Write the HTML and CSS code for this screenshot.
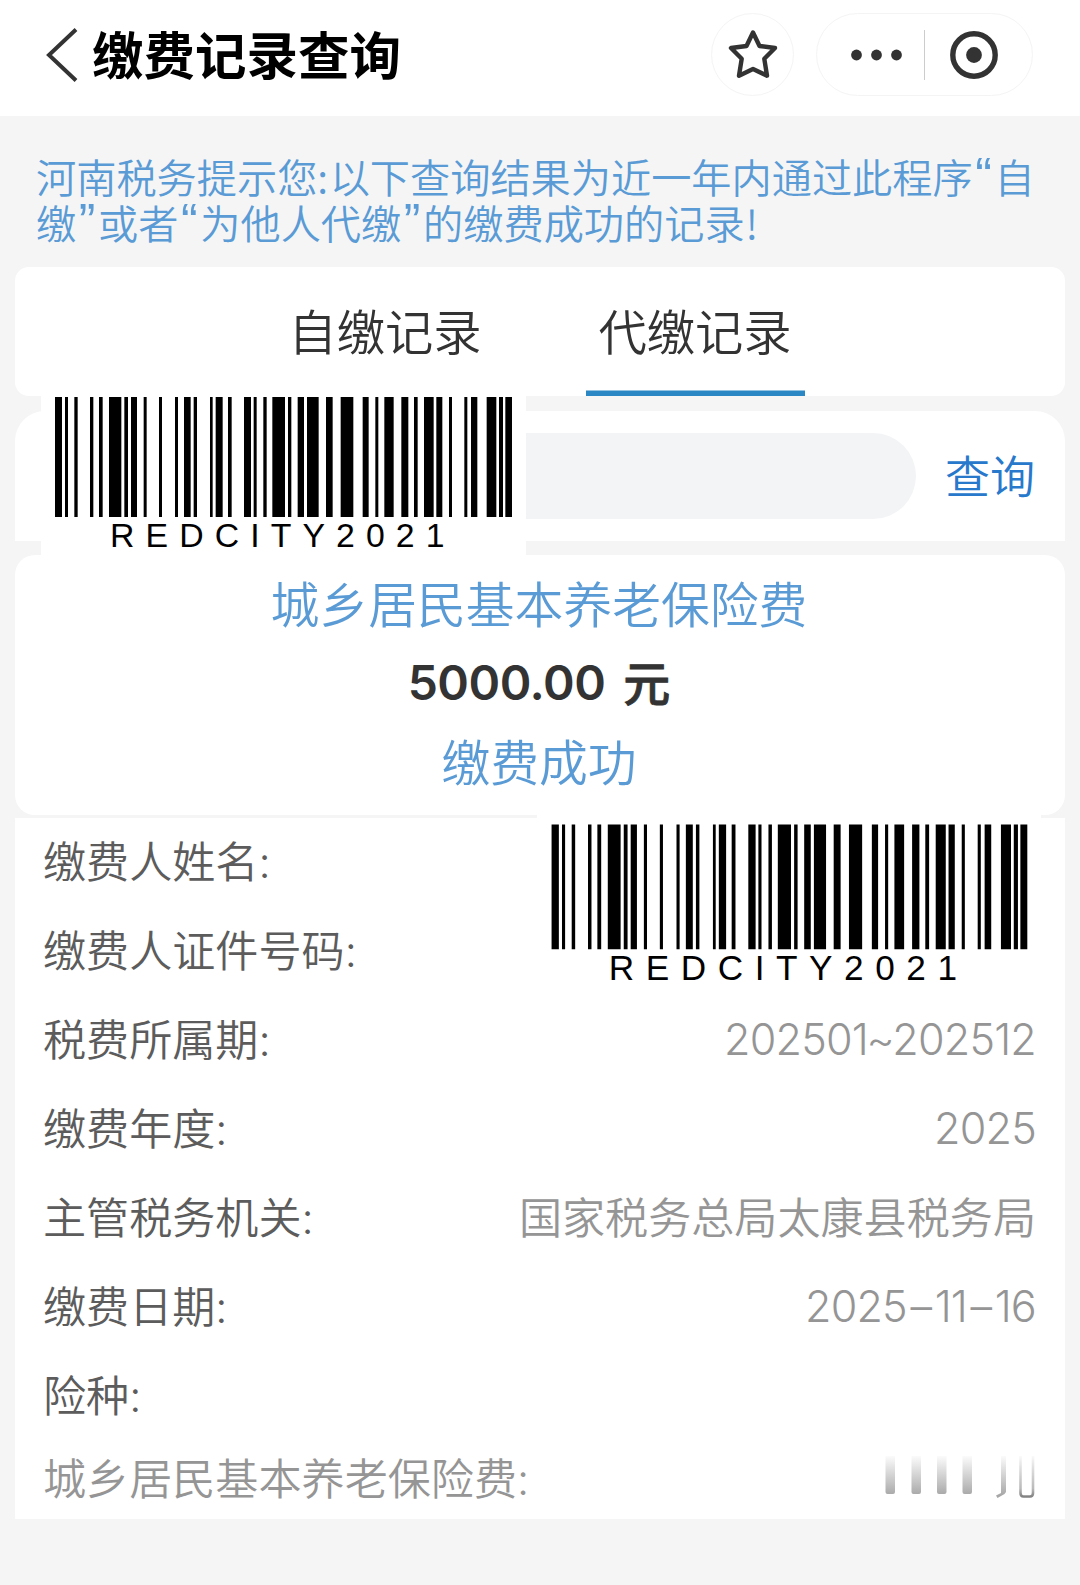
FILE: index.html
```html
<!DOCTYPE html>
<html lang="zh-CN">
<head>
<meta charset="utf-8">
<title>缴费记录查询</title>
<link rel="stylesheet" href="styles.css">
</head>
<body>
<svg class="defs" width="0" height="0" aria-hidden="true">
  <symbol id="barcode" viewBox="0 0 485 168">
    <rect width="485" height="168" fill="#fff"/>
    <path transform="translate(-1 10) scale(.33333 1)" d="M45 0h21v120h-21zM75 0h9v120h-9zM103 0h10v120h-10zM150 0h10v120h-10zM177 0h11v120h-11zM207 0h37v120h-37zM253 0h11v120h-11zM273 0h18v120h-18zM311 0h9v120h-9zM357 0h9v120h-9zM405 0h9v120h-9zM432 0h20v120h-20zM461 0h10v120h-10zM510 0h8v120h-8zM527 0h21v120h-21zM564 0h11v120h-11zM612 0h21v120h-21zM641 0h9v120h-9zM670 0h10v120h-10zM697 0h38v120h-38zM744 0h10v120h-10zM773 0h19v120h-19zM801 0h35v120h-35zM858 0h20v120h-20zM902 0h38v120h-38zM968 0h18v120h-18zM1006 0h9v120h-9zM1033 0h28v120h-28zM1084 0h21v120h-21zM1122 0h11v120h-11zM1152 0h29v120h-29zM1189 0h18v120h-18zM1227 0h9v120h-9zM1273 0h9v120h-9zM1293 0h19v120h-19zM1340 0h29v120h-29zM1377 0h12v120h-12zM1396 0h20v120h-20z"/>
    <text class="barcode-text" x="69" y="159.5">REDCITY2021</text>
  </symbol>
</svg>

<header class="header">
  <svg class="back" width="32" height="54" viewBox="0 0 32 54"><path d="M30 1.5 3 27l27 25.500" fill="none" stroke="#333" stroke-width="4"/></svg>
  <h1 class="title">缴费记录查询</h1>
  <div class="fav">
    <svg width="52" height="52" viewBox="-26 -26 52 52"><path d="M0-22.500 6.500-9 22-7 11.300 3.800 14 20.700 0 14-14 20.700-11.300 3.800-22-7-6.500-9z" fill="none" stroke="#333" stroke-width="4.400" stroke-linejoin="round"/></svg>
  </div>
  <div class="capsule">
    <svg class="dots" width="52" height="12" viewBox="0 0 52 12" fill="#333"><circle cx="5.500" cy="6" r="5.400"/><circle cx="25.500" cy="6" r="5.400"/><circle cx="45.500" cy="6" r="5.400"/></svg>
    <span class="divider"></span>
    <svg class="target" width="48" height="48" viewBox="0 0 48 48"><circle cx="24" cy="24" r="21.200" fill="none" stroke="#333" stroke-width="5.400"/><circle cx="24" cy="24" r="7.900" fill="#333"/></svg>
  </div>
</header>

<main class="content">
  <p class="tip">河南税务提示您<span class="colon">:</span>以下查询结果为近一年内通过此程序<span class="quote">“</span>自<br>缴<span class="quote">”</span>或者<span class="quote">“</span>为他人代缴<span class="quote">”</span>的缴费成功的记录<span class="bang">!</span></p>

  <nav class="tabs">
    <span class="tab">自缴记录</span>
    <span class="tab active">代缴记录</span>
  </nav>

  <section class="search">
    <div class="search-input"></div>
    <span class="search-btn">查询</span>
  </section>

  <section class="summary">
    <div class="summary-name">城乡居民基本养老保险费</div>
    <div class="summary-amount"><span class="num">5000.00</span><span class="unit">元</span></div>
    <div class="summary-status">缴费成功</div>
  </section>

  <section class="detail">
    <div class="row"><span class="label">缴费人姓名:</span></div>
    <div class="row"><span class="label">缴费人证件号码:</span></div>
    <div class="row"><span class="label">税费所属期:</span><span class="value num-value">202501<span class="tilde">~</span>202512</span></div>
    <div class="row"><span class="label">缴费年度:</span><span class="value num-value">2025</span></div>
    <div class="row"><span class="label">主管税务机关:</span><span class="value">国家税务总局太康县税务局</span></div>
    <div class="row"><span class="label">缴费日期:</span><span class="value num-value">2025<span class="dash">–</span>11<span class="dash">–</span>16</span></div>
    <div class="row"><span class="label">险种:</span></div>
    <div class="row last"><span class="label">城乡居民基本养老保险费:</span>
      <svg class="faded" width="152" height="46" viewBox="0 0 152 46">
        <defs>
          <linearGradient id="fade" gradientUnits="userSpaceOnUse" x1="0" y1="0" x2="0" y2="42"><stop offset="0" stop-color="#aaa" stop-opacity="0"/><stop offset="1" stop-color="#a6a6a6"/></linearGradient>
          <linearGradient id="fade-thin" gradientUnits="userSpaceOnUse" x1="0" y1="0" x2="0" y2="43"><stop offset="0" stop-color="#aaa" stop-opacity="0"/><stop offset=".8" stop-color="#bbb"/><stop offset="1" stop-color="#808080"/></linearGradient>
        </defs>
        <path d="M1.500 2h9.500v36q0 2-2 2h-5.500q-2 0-2-2zM27.500 2h9.500v36q0 2-2 2h-5.500q-2 0-2-2zM53 2h9.500v36q0 2-2 2h-5.500q-2 0-2-2zM78.500 2h9.500v36q0 2-2 2h-5.500q-2 0-2-2z" fill="url(#fade)"/>
        <path d="M117 2h5v36l-1.500 2-7 4-1.500-2.500 5-2.500z" fill="url(#fade)"/>
        <path d="M136.500 2v37q0 3.500 3 3.500h6.500q3 0 3-3.500v-37" fill="none" stroke="url(#fade-thin)" stroke-width="2.600"/>
      </svg>
    </div>
  </section>
</main>

<svg class="barcode barcode-query"><use href="#barcode"/></svg>
<svg class="barcode barcode-payer"><use href="#barcode"/></svg>
</body>
</html>
```

FILE: styles.css
```css
* { box-sizing: border-box; }

body {
  margin: 0;
  position: relative;
  width: 1080px;
  height: 1585px;
  overflow: hidden;
  background: #f5f5f5;
  color: #333;
  font-family: "Inter", "Noto Sans CJK SC", sans-serif;
  font-weight: 350;
}

.defs { position: absolute; }

.header {
  display: flex;
  align-items: center;
  height: 116px;
  padding: 0 47px 7px 46px;
  background: #fff;
}

.back { flex: none; }

.title {
  flex: 1;
  margin: 0 0 0 14px;
  padding-top: 2px;
  font-size: 51.500px;
  line-height: 70px;
  font-weight: 700;
  color: #000;
  white-space: nowrap;
}

.fav {
  display: flex;
  align-items: center;
  justify-content: center;
  width: 83px;
  height: 83px;
  margin-right: 22px;
  border: 1.500px solid #f4f4f4;
  border-radius: 50%;
}

.capsule {
  display: flex;
  align-items: center;
  width: 217px;
  height: 83px;
  padding-left: 34px;
  border: 1.500px solid #f4f4f4;
  border-radius: 42px;
}

.divider {
  width: 1px;
  height: 50px;
  margin: 0 25px 0 21px;
  background: #ccc;
}

.content {
  display: flex;
  flex-direction: column;
  padding: 36.500px 15px 0;
}

.tip {
  height: 93.600px;
  margin: 0 0 21px;
  padding-left: 21px;
  font-family: "Noto Sans CJK SC", sans-serif;
  font-size: 40.200px;
  line-height: 46.800px;
  color: #5a9bd5;
  white-space: nowrap;
}

.colon { margin-right: 1.500px; }
.bang { margin-left: 1px; }

.quote {
  margin: 0 2.600px;
  font-family: "Liberation Sans", Arial, sans-serif;
  font-size: 50px;
  line-height: 1px;
}

.tabs {
  display: flex;
  justify-content: center;
  gap: 91px;
  height: 129px;
  border-radius: 14px;
  background: #fff;
}

.tab {
  width: 219px;
  font-size: 48.300px;
  line-height: 131px;
  height: 129px;
  text-align: center;
}

.tab.active { box-shadow: inset 0 -5.500px #2b87c3; }

.search {
  display: flex;
  align-items: center;
  justify-content: space-between;
  height: 130px;
  margin-top: 15px;
  padding: 0 30px 0 40px;
  border-radius: 30px 30px 0 0;
  background: #fff;
}

.search-input {
  width: 861px;
  height: 86px;
  border-radius: 43px;
  background: #f3f4f6;
}

.search-btn {
  padding-top: 3px;
  font-size: 45px;
  line-height: 86px;
  color: #2878cc;
}

.search-btn, .tab, .row { white-space: nowrap; }

.summary {
  display: flex;
  flex-direction: column;
  align-items: center;
  height: 260px;
  margin-top: 14px;
  padding: 11px 2px 0 0;
  border-radius: 20px;
  background: #fff;
  font-size: 48.800px;
  line-height: 79px;
}

.summary-name, .summary-status { color: #5a9bd5; }

.summary-amount {
  display: flex;
  gap: 18px;
  font-size: 48px;
  line-height: 76px;
  margin-bottom: 2px;
}

.num {
  font-weight: 600;
  letter-spacing: -.5px;
}

.unit {
  padding-top: 1px;
  font-size: 47px;
  font-weight: 500;
  -webkit-text-stroke: .8px #333;
}

.detail {
  height: 701px;
  margin-top: 3px;
  padding: 0 29px 0 28px;
  background: #fff;
  font-size: 43.100px;
}

.row {
  display: flex;
  align-items: center;
  justify-content: space-between;
  height: 89.100px;
  padding-bottom: 8px;
}

.label { color: #5c5c5c; }
.value { color: #959595; }

.num-value {
  padding-top: 4px;
  letter-spacing: -.8px;
}

.tilde { margin: 0 -1.500px; }
.dash { margin: 0 3.500px; }

.last { height: 76px; }
.last .label { color: #959595; }
.faded { margin-top: 2px; }

.barcode { position: absolute; }

.barcode-query {
  left: 41px;
  top: 386.700px;
  width: 485px;
  height: 168px;
}

.barcode-payer {
  left: 536.600px;
  top: 813.900px;
  width: 504.900px;
  height: 174.900px;
}

.barcode-text {
  font-family: "Liberation Sans", Arial, sans-serif;
  font-size: 33.800px;
  font-weight: 400;
  letter-spacing: 11.100px;
}
```
